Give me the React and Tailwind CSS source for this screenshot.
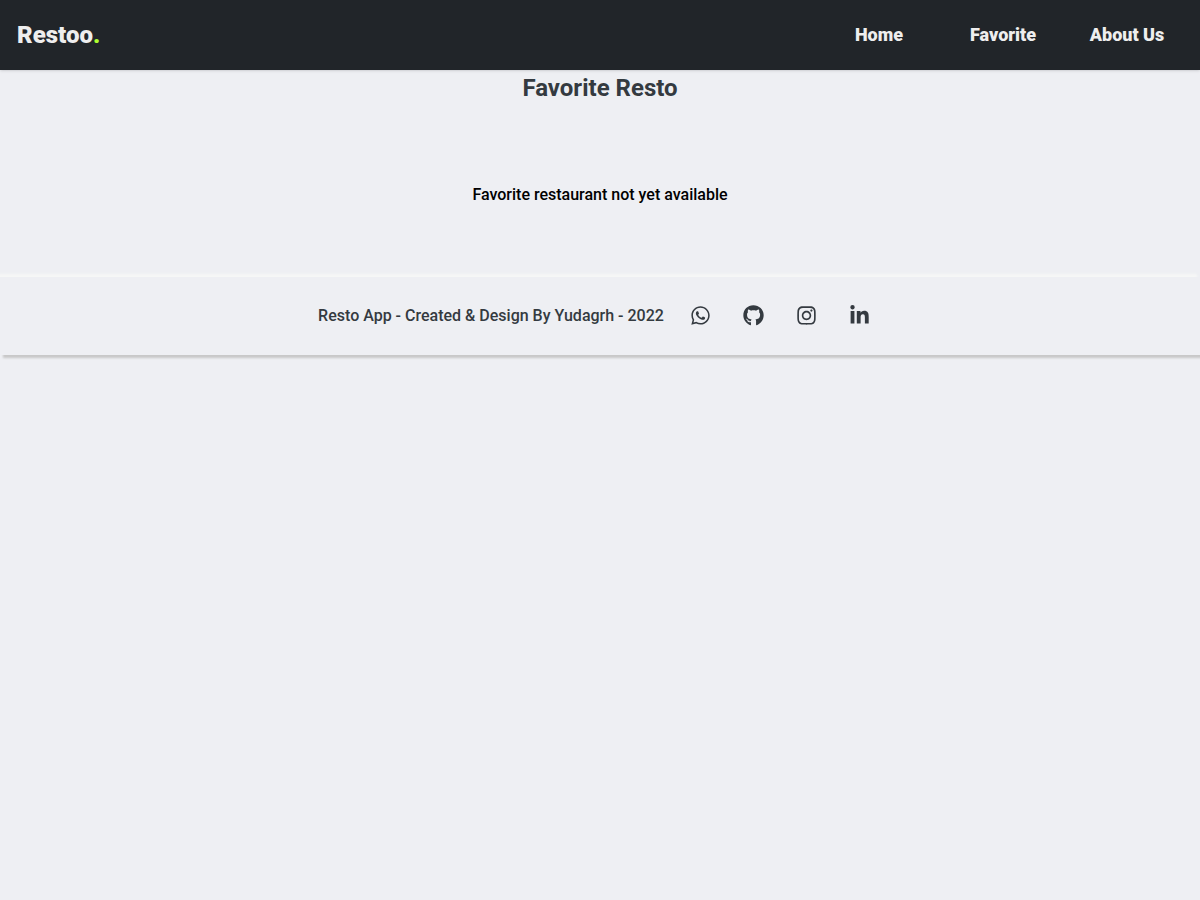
import { FaGithub, FaInstagram, FaLinkedinIn, FaWhatsapp } from "react-icons/fa";

const navItems = [
  { label: "Home", href: "#/home" },
  { label: "Favorite", href: "#/favorite" },
  { label: "About Us", href: "#/about" },
];

const socials = [
  { label: "WhatsApp", Icon: FaWhatsapp },
  { label: "GitHub", Icon: FaGithub },
  { label: "Instagram", Icon: FaInstagram },
  { label: "LinkedIn", Icon: FaLinkedinIn },
];

export default function App() {
  return (
    <div className="min-h-screen bg-[#eeeff3] font-['Roboto',sans-serif] text-black">
      <header className="flex h-[70px] items-center justify-between bg-[#212529] pl-[17px] pr-[11px] text-[#eeeeee] shadow-sm">
        <a href="#/home" className="text-2xl font-black">
          Restoo<span className="text-[#adff2f]">.</span>
        </a>
        <nav>
          <ul className="grid grid-cols-[repeat(3,124px)] text-center text-lg font-black">
            {navItems.map(({ label, href }) => (
              <li key={label}>
                <a href={href}>{label}</a>
              </li>
            ))}
          </ul>
        </nav>
      </header>

      <main className="text-center">
        <h1 className="pt-[2px] text-2xl font-bold text-[#343a40]">Favorite Resto</h1>
        <p className="pt-[79px] pb-[70px] text-base font-medium">
          Favorite restaurant not yet available
        </p>
      </main>

      <footer className="flex h-[78px] items-center justify-center gap-[10px] bg-[#eeeff3] pl-1 text-[#343a40] shadow-[3px_3px_2px_#c8c8c8,-3px_-3px_2px_#f6f7f6]">
        <p className="text-base font-medium">Resto App - Created &amp; Design By Yudagrh - 2022</p>
        <ul className="flex pb-[2px]">
          {socials.map(({ label, Icon }) => (
            <li key={label}>
              <a href="#" aria-label={label} className="flex w-[53px] justify-center">
                <Icon className="size-[21px]" />
              </a>
            </li>
          ))}
        </ul>
      </footer>
    </div>
  );
}
